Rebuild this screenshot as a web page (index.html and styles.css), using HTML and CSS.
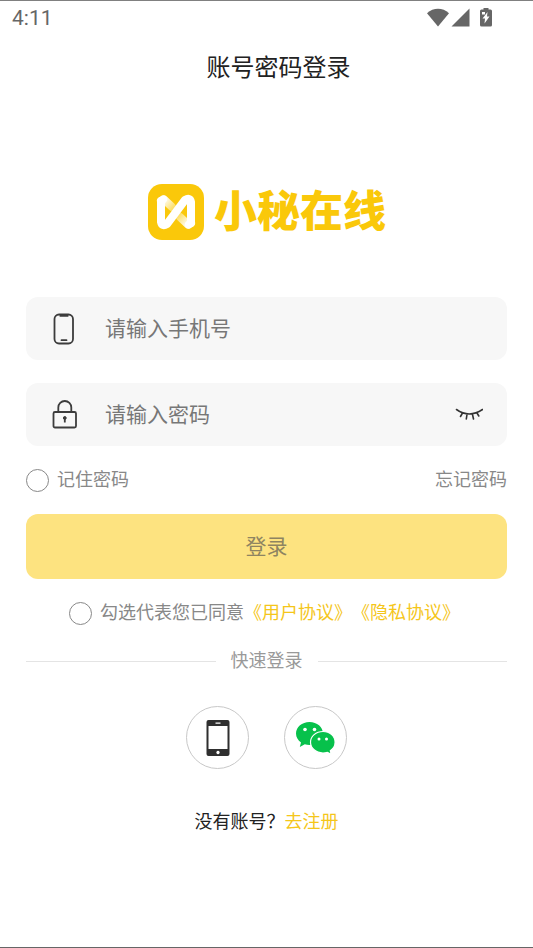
FILE: index.html
```html
<!DOCTYPE html>
<html lang="zh-CN">
<head>
<meta charset="utf-8">
<meta name="viewport" content="width=device-width, initial-scale=1">
<title>账号密码登录</title>
<link rel="stylesheet" href="styles.css">
</head>
<body>
<div class="screen">
  <div class="status">
    <span class="clock">4:11</span>
    <svg class="status-icons" width="66" height="20" viewBox="0 0 66 20" fill="#666" aria-hidden="true">
      <path d="M0 5.200C6.500-.6 15.500-.6 22 5.200L11 18.500Z"/>
      <path d="M42.500.500V18.500H24.500Z"/>
      <path fill-rule="evenodd" d="M56.500 0h5v1.500h2q1.500 0 1.500 1.500v14q0 1.500-1.500 1.500h-9q-1.500 0-1.500-1.500V3q0-1.500 1.500-1.500h2ZM60.500 4l-5 6.500h2.500L57.500 15.500l5-7h-2.500ZM55 4v2.500h3V4Z"/>
    </svg>
  </div>
  <header class="header"><h1>账号密码登录</h1></header>

  <div class="brand">
    <svg width="58" height="58" viewBox="0 0 58 58" aria-hidden="true">
      <defs>
        <linearGradient id="fold-a" gradientUnits="userSpaceOnUse" x1="17" y1="16" x2="30" y2="28"><stop offset="0" stop-color="#fff"/><stop offset="1" stop-color="#fbd432"/></linearGradient>
        <linearGradient id="fold-b" gradientUnits="userSpaceOnUse" x1="41" y1="42" x2="28" y2="30"><stop offset="0" stop-color="#fff"/><stop offset="1" stop-color="#fbd432"/></linearGradient>
      </defs>
      <rect x="1" y="1" width="56" height="56" rx="14" fill="#fac80a"/>
      <g fill="none" stroke-width="8" stroke-linecap="round" stroke-linejoin="round">
        <path d="M17 16.500L25 24" stroke="url(#fold-a)"/>
        <path d="M41 41.500L33 34" stroke="url(#fold-b)"/>
        <path d="M14 18V39Q15 44 20 41L38 17Q43 14 44 19V40" stroke="#fff"/>
        <path d="M14 18L16 16.500M44 40L42 41.500" stroke="#fff"/>
      </g>
    </svg>
    <span class="brand-name">小秘在线</span>
  </div>

  <form class="form">
    <div class="field">
      <label for="phone" aria-label="手机号">
        <svg width="28" height="32" viewBox="0 0 28 32" fill="none" stroke="#3c3c3c" stroke-width="1.800" stroke-linecap="round" aria-hidden="true">
          <rect x="4.500" y="1.500" width="18.500" height="29" rx="4.500"/>
          <path d="M10.500 2h7v.8h-7ZM11.500 27.200h5"/>
        </svg>
      </label>
      <input id="phone" type="tel" placeholder="请输入手机号">
    </div>
    <div class="field">
      <label for="password" aria-label="密码">
        <svg width="28" height="32" viewBox="0 0 28 32" fill="none" stroke="#3c3c3c" stroke-width="1.800" aria-hidden="true">
          <rect x="3.500" y="13" width="22.500" height="15.500" rx="1.500"/>
          <path d="M8.300 13V8.500a6.500 6.500 0 0 1 13 0V13"/>
          <circle cx="14.800" cy="19" r="1.400" fill="#3c3c3c" stroke-width="1"/>
          <path d="M14.800 19v4.500"/>
        </svg>
      </label>
      <input id="password" type="password" placeholder="请输入密码">
      <button class="eye" type="button" aria-label="显示密码">
        <svg width="28" height="14" viewBox="0 0 28 14" fill="none" stroke="#333" stroke-width="1.600" stroke-linecap="round" aria-hidden="true">
          <path d="M1.500 1.500Q14 10.500 27.500 1.500M7.500 5L5.500 8.500M12 6.500L11.300 11M17.500 6.500L18.500 11M22 5L23.800 8"/>
        </svg>
      </button>
    </div>
    <div class="options">
      <label class="check"><input type="checkbox">记住密码</label>
      <a href="#">忘记密码</a>
    </div>
    <button class="submit" type="submit">登录</button>
    <div class="agree">
      <label class="check"><input type="checkbox">勾选代表您已同意</label><a href="#">《用户协议》</a><a href="#">《隐私协议》</a>
    </div>
  </form>

  <div class="divider">快速登录</div>
  <div class="quick">
    <button type="button" aria-label="手机登录">
      <svg width="26" height="38" viewBox="0 0 26 38" aria-hidden="true">
        <path fill="#2f2f2f" fill-rule="evenodd" d="M3.500 1h19q2 0 2 2v32q0 2-2 2h-19q-2 0-2-2V3q0-2 2-2ZM3.500 7v23h19V7ZM10.500 3.500v1.300h5V3.500ZM13 31.800a1.700 1.700 0 1 0 .010 0Z"/>
      </svg>
    </button>
    <button type="button" aria-label="微信登录">
      <svg width="42" height="34" viewBox="0 0 42 34" fill="#07c14b" aria-hidden="true">
        <path d="M14.500 1C7 1 1 6 1 12.500c0 3.700 2 6.800 5 9L4.800 26l5-2.700c1.500.4 3 .7 4.700.7C22 24 28 19 28 12.500S22 1 14.500 1Z"/>
        <path stroke="#fff" stroke-width="1.200" d="M28 10.500c-7 0-12.500 4.800-12.500 10.700S21 32 28 32c1.600 0 3-.2 4.400-.7l3.800 2-.9-3.600c3-2 4.800-5 4.800-8.500 0-5.900-5.100-10.700-12.100-10.700Z"/>
        <g fill="#fff"><circle cx="10" cy="8.500" r="1.800"/><circle cx="19.500" cy="8.500" r="1.800"/><circle cx="24" cy="18" r="1.500"/><circle cx="31.500" cy="18" r="1.500"/></g>
      </svg>
    </button>
  </div>
  <p class="register">没有账号？<a href="#">去注册</a></p>
</div>
</body>
</html>
```
FILE: styles.css
```css
* { box-sizing: border-box; }
body {
  margin: 0;
  background: #fff;
  color: #222;
  font-family: Roboto, "Noto Sans CJK SC", sans-serif;
  font-size: 18px;
  line-height: 24px;
}
.screen {
  min-height: 100vh;
  padding: 0 26px;
  border-top: 1px solid #808080;
  border-bottom: 1px solid #666;
}
a { color: #f5c61a; text-decoration: none; }
button, input { font: inherit; }
button { padding: 0; border: 0; background: none; }
svg { display: block; }

.status {
  display: flex;
  justify-content: space-between;
  align-items: center;
  height: 34px;
  margin: 0 14px 0 -14px;
}
.clock { color: #666; font-size: 21px; }

.header { padding: 17px 0 0 24px; text-align: center; }
h1 { margin: 0; font-size: 24px; line-height: 32px; font-weight: 400; }

.brand {
  display: flex;
  justify-content: center;
  align-items: center;
  gap: 9px;
  margin-top: 99px;
}
.brand-name {
  color: #fac80a;
  font-size: 43px;
  font-weight: 900;
  line-height: 58px;
}

.form { margin-top: 56px; }
.field {
  display: flex;
  align-items: center;
  height: 63px;
  margin-bottom: 23px;
  padding: 0 24px;
  border-radius: 12px;
  background: #f7f7f7;
}
.field input {
  flex: 1;
  min-width: 0;
  margin-left: 27px;
  padding: 0;
  border: 0;
  outline: 0;
  background: none;
  font-size: 21px;
  line-height: 32px;
}
.field input::placeholder { color: #777; opacity: 1; }

.options { display: flex; justify-content: space-between; margin-top: -1px; }
.options, .options a { color: #888; }
.check { display: flex; align-items: center; gap: 8px; color: #888; }
.check input {
  appearance: none;
  width: 23px;
  height: 23px;
  margin: 0;
  border: 1px solid #888;
  border-radius: 50%;
}
.check input:checked { background: #fac80a; }

.submit {
  width: 100%;
  height: 65px;
  margin: 22px 0;
  border-radius: 12px;
  background: #fde380;
  color: #8e8461;
  font-size: 21px;
}
.agree { display: flex; justify-content: center; padding-right: 4px; }

.divider {
  display: flex;
  align-items: center;
  gap: 15px;
  margin-top: 24px;
  color: #999;
}
.divider::before, .divider::after {
  content: "";
  flex: 1;
  height: 1px;
  background: #e4e4e4;
}

.quick { display: flex; justify-content: center; gap: 35px; margin-top: 33px; }
.quick button {
  display: grid;
  place-items: center;
  width: 63px;
  height: 63px;
  border: 1px solid #c8c8c8;
  border-radius: 50%;
}
.register { margin: 41px 0 0; text-align: center; }
```
